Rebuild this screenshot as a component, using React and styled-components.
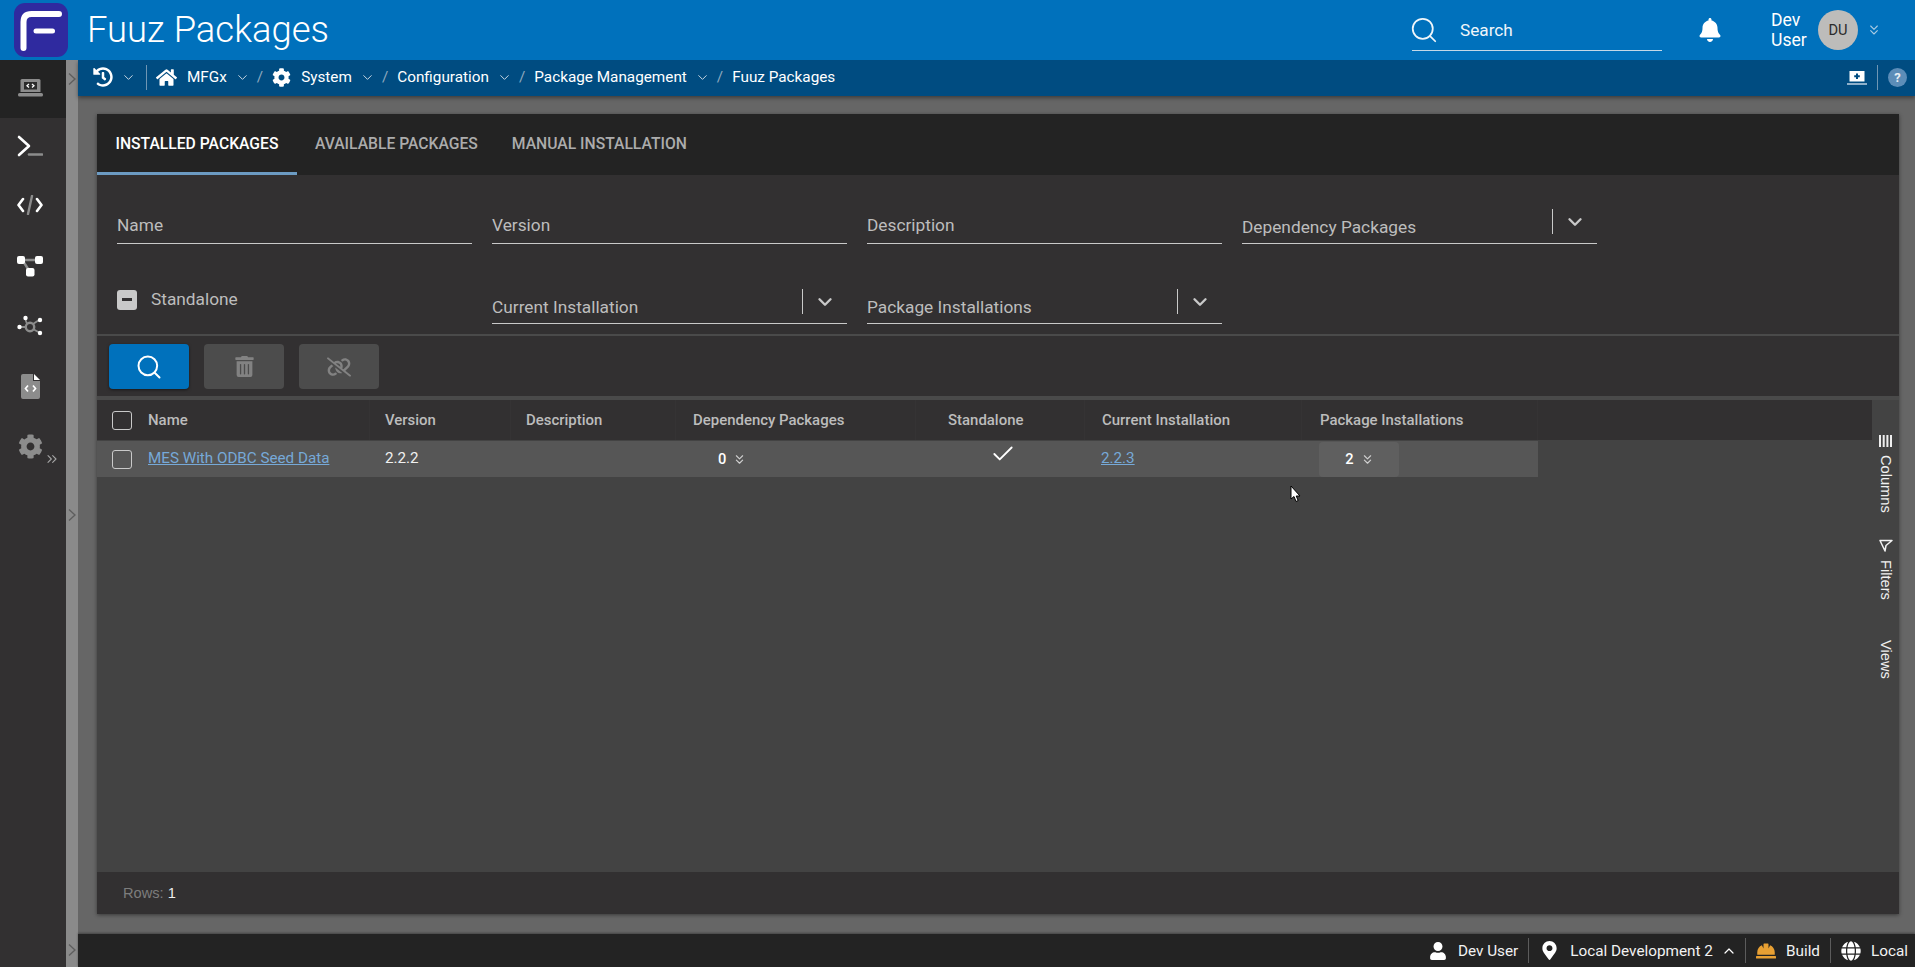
import React from 'react'
import styled, { createGlobalStyle } from 'styled-components'
import { Search, Check, ChevronDown, ChevronUp, ChevronsDown, ChevronsRight } from 'lucide-react'
import { FaBell, FaHome, FaCog, FaUser, FaMapMarkerAlt, FaHardHat, FaGlobe, FaTrashAlt, FaHistory } from 'react-icons/fa'
import { FaLinkSlash } from 'react-icons/fa6'

const GlobalStyle = createGlobalStyle`
  html, body, #root {
    margin: 0;
    height: 100%;
  }
  body {
    font-family: Roboto, "Liberation Sans", sans-serif;
    background: #666;
    overflow: hidden;
  }
`

const Page = styled.div`
  display: flex;
  flex-direction: column;
  height: 100vh;
  position: relative;
`

const Header = styled.header`
  flex: none;
  height: 60px;
  background: #0071bc;
  display: flex;
  align-items: center;
  color: #fff;
  padding-left: 14px;
  position: relative;
  z-index: 2;
`

const Logo = styled.div`
  width: 54px;
  height: 54px;
  border-radius: 11px;
  background: #2f2a9f;
  svg { display: block; }
`

const Title = styled.h1`
  margin: 0 0 0 19px;
  font-size: 36.4px;
  font-weight: 300;
  line-height: 60px;
  flex: 1;
`

const SearchBox = styled.div`
  align-self: flex-start;
  width: 250px;
  height: 51px;
  padding-top: 10px;
  box-sizing: border-box;
  border-bottom: 1px solid #c4d9e8;
  display: flex;
  align-items: center;
  gap: 21px;
  font-size: 17.2px;
  color: #f0f6fa;
  margin-right: 36px;
  svg { margin-left: -3px; }
`

const BellWrap = styled.div`
  display: flex;
  color: #fff;
  margin-right: 49px;
`

const UserName = styled.div`
  font-size: 17.6px;
  line-height: 20px;
  width: 47px;
  margin-top: -1px;
`

const Avatar = styled.div`
  width: 40px;
  height: 40px;
  border-radius: 50%;
  background: #bdbcba;
  color: #2b2b2b;
  font-size: 14.65px;
  display: flex;
  align-items: center;
  justify-content: center;
`

const UserCaret = styled.div`
  display: flex;
  width: 57px;
  padding-left: 8px;
  box-sizing: border-box;
  color: #a9cbe3;
`

const Body = styled.div`
  flex: 1;
  min-height: 0;
  display: flex;
`

const Sidebar = styled.nav`
  flex: none;
  width: 66px;
  background: #323031;
  display: flex;
  flex-direction: column;
  align-items: stretch;
  position: relative;
`

const SideItem = styled.div`
  height: ${p => p.$height || 60}px;
  background: ${p => (p.$active ? '#232323' : 'transparent')};
  display: flex;
  align-items: center;
  justify-content: center;
  padding-right: 6px;
  padding-bottom: ${p => (p.$active ? 2 : 0)}px;
  box-sizing: border-box;
  svg { display: block; }
`

const SideExpand = styled.div`
  position: absolute;
  left: 44px;
  top: 391px;
  color: #a5a5a5;
  display: flex;
`

const Rail = styled.div`
  flex: none;
  width: 12px;
  background: #8a8a8a;
  display: flex;
  flex-direction: column;
  justify-content: space-between;
  align-items: center;
  padding: 13px 0 11px;
  box-sizing: border-box;
`

const Main = styled.main`
  flex: 1;
  min-width: 0;
  display: flex;
  flex-direction: column;
`

const Crumbs = styled.div`
  flex: none;
  height: 36px;
  background: #004c81;
  box-shadow: 0 2px 4px rgba(0, 0, 0, 0.4);
  color: #fff;
  display: flex;
  align-items: center;
  padding: 0 0 2px 15px;
  box-sizing: border-box;
  font-size: 15.3px;
  position: relative;
  z-index: 1;
`

const CrumbIcon = styled.span`
  display: flex;
  margin-right: ${p => p.$gap ?? 10}px;
  color: #fff;
`

const CrumbCaret = styled.span`
  display: flex;
  margin: 0 ${p => p.$right ?? 7}px 0 ${p => p.$left ?? 8}px;
  color: #c7d6e2;
`

const CrumbSlash = styled.span`
  color: #8fa9bf;
  margin-right: 9px;
`

const VBar = styled.span`
  width: 1px;
  height: 25px;
  background: ${p => p.$color || '#6f96b4'};
  margin: 0 ${p => p.$right ?? 9}px 0 ${p => p.$left ?? 9}px;
  flex: none;
`

const CrumbSpacer = styled.div`
  flex: 1;
`

const LaptopSvg = styled.svg`
  margin-top: 2px;
`

const HelpDot = styled.span`
  width: 19px;
  height: 19px;
  border-radius: 50%;
  background: #5c8db8;
  font-size: 13px;
  font-weight: 700;
  color: #e8eef4;
  display: flex;
  align-items: center;
  justify-content: center;
  margin: 1px 8px 0 0;
`

const Content = styled.div`
  flex: 1;
  min-height: 0;
  background: #666;
  padding: 18px 16px 20px 19px;
  display: flex;
`

const Panel = styled.section`
  flex: 1;
  min-width: 0;
  display: flex;
  flex-direction: column;
  background: #323031;
  box-shadow: 0 1px 4px rgba(0, 0, 0, 0.45);
`

const Tabs = styled.div`
  flex: none;
  height: 61px;
  background: #232323;
  display: flex;
`

const Tab = styled.div`
  display: flex;
  align-items: center;
  padding: 0 ${p => p.$pad}px;
  font-size: 15.7px;
  font-weight: 500;
  text-transform: uppercase;
  color: ${p => (p.$active ? '#fff' : '#acacac')};
  border-bottom: 3px solid ${p => (p.$active ? '#6c9bc3' : 'transparent')};
  box-sizing: border-box;
`

const Form = styled.div`
  flex: none;
  display: grid;
  grid-template-columns: repeat(4, 355px);
  column-gap: 20px;
  row-gap: 31px;
  grid-auto-rows: 49px;
  padding: 20px 0 10px 20px;
  border-bottom: 2px solid #4a4a4a;
`

const Field = styled.div`
  display: flex;
  align-items: flex-end;
  border-bottom: 1px solid #c9c9c9;
  box-sizing: border-box;
  color: #bdbdbd;
  font-size: 17.3px;
`

const FieldLabel = styled.span`
  flex: 1;
  line-height: 19px;
  padding-bottom: ${p => p.$pad}px;
`

const SelectCaret = styled.span`
  flex: none;
  width: 45px;
  height: 25px;
  margin-bottom: 9px;
  box-sizing: border-box;
  border-left: 1px solid #c9c9c9;
  display: flex;
  align-items: center;
  justify-content: center;
  color: #c9c9c9;
`

const CheckField = styled.div`
  display: flex;
  align-items: center;
  gap: 14px;
  padding-bottom: 2px;
  color: #bdbdbd;
  font-size: 17.3px;
`

const MinusBox = styled.span`
  width: 20px;
  height: 20px;
  margin-top: 2px;
  border-radius: 3px;
  background: #c9c9c9;
  display: flex;
  align-items: center;
  justify-content: center;
  &::after {
    content: '';
    width: 10px;
    height: 2.5px;
    background: #323031;
  }
`

const Toolbar = styled.div`
  flex: none;
  display: flex;
  gap: 15px;
  padding: 8px 12px 7px;
  border-bottom: 4px solid #4a4a4a;
`

const ToolButton = styled.div`
  width: 80px;
  height: 45px;
  border-radius: 4px;
  display: flex;
  align-items: center;
  justify-content: center;
  background: ${p => (p.$primary ? '#0071bc' : '#4c4c4c')};
  color: ${p => (p.$primary ? '#fff' : '#828282')};
  box-shadow: ${p => (p.$primary ? '0 1px 3px rgba(0,0,0,.5)' : 'none')};
`

const GridArea = styled.div`
  flex: 1;
  min-height: 0;
  display: flex;
  background: #434343;
`

const GridMain = styled.div`
  flex: 1;
  min-width: 0;
  display: flex;
  flex-direction: column;
`

const HeaderRow = styled.div`
  flex: none;
  height: 41px;
  background: #323031;
  display: grid;
  grid-template-columns: 273px 141px 165px 240px 169px 217px 236px;
  box-sizing: border-box;
  border-bottom: 1px solid #434343;
`

const HeaderCell = styled.div`
  display: flex;
  align-items: center;
  gap: 16px;
  padding-left: ${p => p.$pad ?? 15}px;
  font-size: 14.95px;
  font-weight: 500;
  color: #bcbcbc;
  box-shadow: inset -1px 0 0 #353334;
`

const BodyRow = styled.div`
  flex: none;
  height: 36px;
  width: 1441px;
  background: #565656;
  display: grid;
  grid-template-columns: 273px 141px 165px 240px 169px 217px 236px;
  grid-template-rows: 36px;
`

const Cell = styled.div`
  display: flex;
  align-items: center;
  gap: 16px;
  padding-left: ${p => p.$pad ?? 15}px;
  font-size: 15.2px;
  color: #f0f0f0;
  box-sizing: border-box;
`

const CellText = styled.span`
  margin-bottom: 3px;
`

const BoxCheck = styled.span`
  flex: none;
  width: 20px;
  height: 19px;
  border: 1.5px solid #c9c9c9;
  border-radius: 3px;
  box-sizing: border-box;
`

const GridLink = styled.a`
  color: #76a9d8;
  text-decoration: underline;
  margin-bottom: 3px;
`

const Count = styled.span`
  display: flex;
  align-items: center;
  gap: 6px;
  color: #fff;
  font-weight: 500;
  font-size: 14.65px;
  margin-left: ${p => p.$left || 0}px;
  svg { color: #d0d0d0; }
`

const CountButton = styled.div`
  width: 80px;
  height: 35px;
  padding-left: 2px;
  box-sizing: border-box;
  background: #5f5f5f;
  border-radius: 4px;
  display: flex;
  align-items: center;
  justify-content: center;
`

const CheckMark = styled(Check)`
  margin-bottom: 10px;
  color: #fff;
`

const SideBar = styled.aside`
  flex: none;
  width: 27px;
  position: relative;
  background: #434343;
  color: #f0f0f0;
  font-family: "Liberation Sans", Arial, sans-serif;
  font-size: 14.65px;
  display: flex;
  flex-direction: column;
  align-items: center;
  padding-top: ${p => p.$top}px;
  box-sizing: border-box;
`

const SideTool = styled.div`
  display: flex;
  flex-direction: column;
  align-items: center;
  gap: 8px;
  margin-bottom: ${p => p.$gap}px;
  svg { display: block; }
`

const SideToolLabel = styled.span`
  writing-mode: vertical-rl;
  line-height: 17px;
`

const StatusRow = styled.div`
  flex: none;
  height: 42px;
  background: #323031;
  padding-left: 26px;
  display: flex;
  align-items: center;
  gap: 4px;
  font-family: "Liberation Sans", Arial, sans-serif;
  font-size: 14.65px;
  color: #7d7d7d;
  b { font-weight: 400; color: #eee; }
`

const BottomBar = styled.footer`
  flex: none;
  height: 33px;
  background: #232323;
  color: #f2f2f2;
  display: flex;
  align-items: center;
  justify-content: flex-end;
  padding-right: 7px;
  font-size: 15.3px;
  box-shadow: 0 -1px 2px rgba(0, 0, 0, 0.35);
`

const BottomIcon = styled.span`
  display: flex;
  margin-right: ${p => p.$gap ?? 10}px;
  margin-left: ${p => p.$left ?? 0}px;
  color: ${p => p.$color || '#fff'};
`

const Cursor = styled.svg`
  position: absolute;
  left: 1290px;
  top: 485px;
  z-index: 5;
`

const LogoMark = () => (
  <svg width="54" height="54" viewBox="0 0 54 54" fill="none" stroke="#fff" strokeLinecap="round">
    <path d="M9.5 45 V19 Q9.5 11 17.5 11 H45" strokeWidth="6" />
    <path d="M22 28 H38.5" strokeWidth="5" />
  </svg>
)

const LaptopCode = ({ size = 25, tone = '#8c8c8c', ink = '#fff' }) => (
  <svg width={size} height={size * 0.72} viewBox="0 0 25 18" fill="none">
    <path d="M4 0 H21 Q22.5 0 22.5 1.5 V13 H2.5 V1.5 Q2.5 0 4 0 Z" fill={tone} />
    <rect x="6" y="3" width="13" height="7.5" fill="#2b2b2b" />
    <path d="M11 5 L9 6.8 L11 8.6 M14 5 L16 6.8 L14 8.6" stroke={ink} strokeWidth="1.3" />
    <rect x="0" y="14" width="25" height="3.5" rx="1.5" fill={tone} />
  </svg>
)

const Terminal = () => (
  <svg width="26" height="22" viewBox="0 0 26 22" fill="none">
    <path d="M2 2 L12 11 L2 20" stroke="#fff" strokeWidth="2.6" strokeLinecap="round" strokeLinejoin="round" />
    <path d="M12 19.5 H25" stroke="#8c8c8c" strokeWidth="2.6" strokeLinecap="round" />
  </svg>
)

const CodeIcon = () => (
  <svg width="26" height="20" viewBox="0 0 26 20" fill="none">
    <path d="M6 4 L1.5 10 L6 16 M20 4 L24.5 10 L20 16" stroke="#fff" strokeWidth="2.6" strokeLinecap="round" strokeLinejoin="round" />
    <path d="M15 1 L11 19" stroke="#8c8c8c" strokeWidth="2.4" strokeLinecap="round" />
  </svg>
)

const Diagram = () => (
  <svg width="26" height="21" viewBox="0 0 26 21" fill="none">
    <path d="M6 4 H20 M6 5 L13 16" stroke="#8c8c8c" strokeWidth="2.4" />
    <rect x="0" y="0" width="8" height="8" rx="2" fill="#fff" />
    <rect x="18" y="0" width="8" height="8" rx="2" fill="#fff" />
    <rect x="9" y="12" width="8.5" height="8.5" rx="2" fill="#fff" />
  </svg>
)

const Network = () => (
  <svg width="26" height="22" viewBox="0 0 26 22" fill="none">
    <circle cx="13" cy="12" r="4.2" stroke="#8c8c8c" strokeWidth="2.4" />
    <path d="M8 3 L10 9 M22 5 L16 9 M3 12 H9 M23 18 L16 14" stroke="#8c8c8c" strokeWidth="1.8" />
    <circle cx="8.5" cy="3" r="2.2" fill="#fff" />
    <circle cx="23" cy="5" r="2.2" fill="#fff" />
    <circle cx="2.5" cy="12" r="2.2" fill="#fff" />
    <circle cx="23" cy="18" r="2.2" fill="#fff" />
  </svg>
)

const FileCode = () => (
  <svg width="19" height="25" viewBox="0 0 19 25">
    <path d="M2 0 H12 V7 H19 V23 Q19 25 17 25 H2 Q0 25 0 23 V2 Q0 0 2 0 Z" fill="#8c8c8c" />
    <path d="M13 0 L19 6 H13 Z" fill="#fff" />
    <path d="M7 11.5 L4.5 14.5 L7 17.5 M12 11.5 L14.5 14.5 L12 17.5" fill="none" stroke="#fff" strokeWidth="1.7" />
  </svg>
)

const ColumnsIcon = () => (
  <svg width="13" height="12" viewBox="0 0 13 12" fill="#eee">
    <rect x="0" y="0" width="2" height="12" />
    <rect x="3.7" y="0" width="2" height="12" />
    <rect x="7.4" y="0" width="2" height="12" />
    <rect x="11" y="0" width="2" height="12" />
  </svg>
)

const FilterIcon = () => (
  <svg width="14" height="13" viewBox="0 0 14 13" fill="none" stroke="#f2f2f2" strokeWidth="1.5">
    <path d="M1 1.5 H13 L7 6.5 L6 12 Z" strokeLinejoin="round" />
  </svg>
)

const LaptopPlus = () => (
  <LaptopSvg width="20" height="14" viewBox="0 0 20 14">
    <rect x="2.5" y="0" width="15" height="10.5" fill="#fff" />
    <path d="M10 2.5 V8 M7.2 5.2 H12.8" stroke="#004c81" strokeWidth="2" />
    <rect x="0" y="12" width="20" height="2" fill="#8fb0ca" />
  </LaptopSvg>
)

const RailChevron = () => (
  <svg width="8" height="12" viewBox="0 0 8 12" fill="none" stroke="#5e5e5e" strokeWidth="1.4">
    <path d="M1 0.5 L7 6 L1 11.5" />
  </svg>
)

const CrumbDown = () => <ChevronDown size={15} strokeWidth={1.6} />

const SelectDown = () => <ChevronDown size={22} strokeWidth={2.6} />

const App = () => (
  <Page>
    <GlobalStyle />
    <Header>
      <Logo><LogoMark /></Logo>
      <Title>Fuuz Packages</Title>
      <SearchBox>
        <Search size={30} strokeWidth={1.4} />
        Search
      </SearchBox>
      <BellWrap><FaBell size={24} /></BellWrap>
      <UserName>Dev User</UserName>
      <Avatar>DU</Avatar>
      <UserCaret><ChevronsDown size={16} strokeWidth={1.6} /></UserCaret>
    </Header>
    <Body>
      <Sidebar>
        <SideItem $active $height={58}><LaptopCode /></SideItem>
        <SideItem $height={56}><Terminal /></SideItem>
        <SideItem $height={62}><CodeIcon /></SideItem>
        <SideItem><Diagram /></SideItem>
        <SideItem><Network /></SideItem>
        <SideItem><FileCode /></SideItem>
        <SideItem><FaCog size={25} color="#8c8c8c" /></SideItem>
        <SideExpand><ChevronsRight size={16} strokeWidth={1.6} /></SideExpand>
      </Sidebar>
      <Rail>
        <RailChevron />
        <RailChevron />
        <RailChevron />
      </Rail>
      <Main>
        <Crumbs>
          <CrumbIcon $gap={0}><FaHistory size={20} /></CrumbIcon>
          <CrumbCaret $left={8} $right={0}><CrumbDown /></CrumbCaret>
          <VBar $left={10} $right={9} />
          <CrumbIcon $gap={10}><FaHome size={21} /></CrumbIcon>
          MFGx
          <CrumbCaret><CrumbDown /></CrumbCaret>
          <CrumbSlash>/</CrumbSlash>
          <CrumbIcon $gap={10}><FaCog size={19} /></CrumbIcon>
          System
          <CrumbCaret><CrumbDown /></CrumbCaret>
          <CrumbSlash>/</CrumbSlash>
          Configuration
          <CrumbCaret><CrumbDown /></CrumbCaret>
          <CrumbSlash>/</CrumbSlash>
          Package Management
          <CrumbCaret><CrumbDown /></CrumbCaret>
          <CrumbSlash>/</CrumbSlash>
          Fuuz Packages
          <CrumbSpacer />
          <LaptopPlus />
          <VBar $left={10} $right={10} />
          <HelpDot>?</HelpDot>
        </Crumbs>
        <Content>
          <Panel>
            <Tabs>
              <Tab $active $pad={18.5}>Installed Packages</Tab>
              <Tab $pad={18}>Available Packages</Tab>
              <Tab $pad={16}>Manual Installation</Tab>
            </Tabs>
            <Form>
              <Field><FieldLabel $pad={8}>Name</FieldLabel></Field>
              <Field><FieldLabel $pad={8}>Version</FieldLabel></Field>
              <Field><FieldLabel $pad={8}>Description</FieldLabel></Field>
              <Field>
                <FieldLabel $pad={6}>Dependency Packages</FieldLabel>
                <SelectCaret><SelectDown /></SelectCaret>
              </Field>
              <CheckField><MinusBox />Standalone</CheckField>
              <Field>
                <FieldLabel $pad={6}>Current Installation</FieldLabel>
                <SelectCaret><SelectDown /></SelectCaret>
              </Field>
              <Field>
                <FieldLabel $pad={6}>Package Installations</FieldLabel>
                <SelectCaret><SelectDown /></SelectCaret>
              </Field>
            </Form>
            <Toolbar>
              <ToolButton $primary><Search size={28} strokeWidth={1.7} /></ToolButton>
              <ToolButton><FaTrashAlt size={21} /></ToolButton>
              <ToolButton><FaLinkSlash size={24} /></ToolButton>
            </Toolbar>
            <GridArea>
              <GridMain>
                <HeaderRow>
                  <HeaderCell $pad={15}><BoxCheck />Name</HeaderCell>
                  <HeaderCell>Version</HeaderCell>
                  <HeaderCell>Description</HeaderCell>
                  <HeaderCell $pad={17}>Dependency Packages</HeaderCell>
                  <HeaderCell $pad={32}>Standalone</HeaderCell>
                  <HeaderCell $pad={17}>Current Installation</HeaderCell>
                  <HeaderCell $pad={18}>Package Installations</HeaderCell>
                </HeaderRow>
                <BodyRow>
                  <Cell $pad={15}><BoxCheck /><GridLink>MES With ODBC Seed Data</GridLink></Cell>
                  <Cell><CellText>2.2.2</CellText></Cell>
                  <Cell />
                  <Cell $pad={0}>
                    <Count $left={42}>0 <ChevronsDown size={15} strokeWidth={1.8} /></Count>
                  </Cell>
                  <Cell $pad={74}><CheckMark size={26} strokeWidth={1.7} /></Cell>
                  <Cell $pad={16}><GridLink>2.2.3</GridLink></Cell>
                  <Cell $pad={17}>
                    <CountButton><Count>2 <ChevronsDown size={15} strokeWidth={1.8} /></Count></CountButton>
                  </Cell>
                </BodyRow>
              </GridMain>
              <SideBar $top={35}>
                <SideTool $gap={26}>
                  <ColumnsIcon />
                  <SideToolLabel>Columns</SideToolLabel>
                </SideTool>
                <SideTool $gap={40}>
                  <FilterIcon />
                  <SideToolLabel>Filters</SideToolLabel>
                </SideTool>
                <SideTool $gap={0}>
                  <SideToolLabel>Views</SideToolLabel>
                </SideTool>
              </SideBar>
            </GridArea>
            <StatusRow>Rows: <b>1</b></StatusRow>
          </Panel>
        </Content>
        <BottomBar>
          <BottomIcon $gap={11}><FaUser size={18} /></BottomIcon>
          Dev User
          <VBar $color="#5c5c5c" $left={10} $right={11} />
          <BottomIcon $gap={11}><FaMapMarkerAlt size={19} /></BottomIcon>
          Local Development 2
          <BottomIcon $gap={0} $left={8}><ChevronUp size={16} strokeWidth={1.8} /></BottomIcon>
          <VBar $color="#5c5c5c" $left={8} $right={10} />
          <BottomIcon $color="#e8a033" $gap={10}><FaHardHat size={20} /></BottomIcon>
          Build
          <VBar $color="#5c5c5c" $left={10} $right={10} />
          <BottomIcon $gap={10}><FaGlobe size={20} /></BottomIcon>
          Local
        </BottomBar>
      </Main>
    </Body>
    <Cursor width="12" height="18" viewBox="0 0 12 18">
      <path d="M1 1 V14 L4 11.5 L6 16.5 L8.2 15.5 L6.2 11 H10 Z" fill="#fff" stroke="#000" strokeWidth="1" />
    </Cursor>
  </Page>
)

export default App
